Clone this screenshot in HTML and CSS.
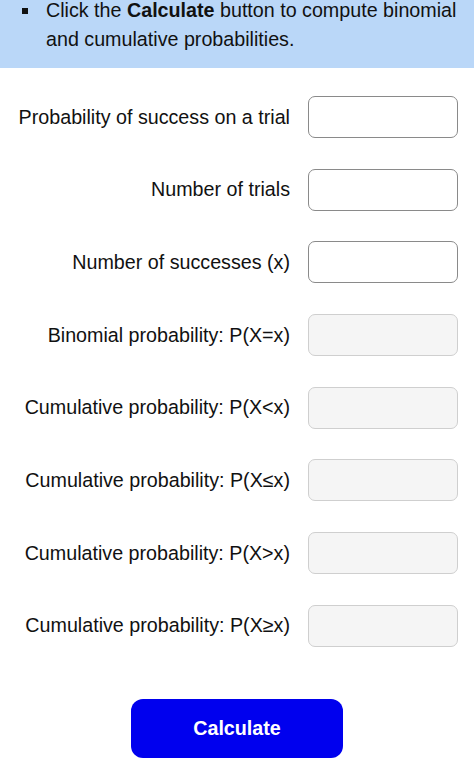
FILE: index.html
```html
<!DOCTYPE html>
<html lang="en">
<head>
    <meta charset="UTF-8">
    <meta name="viewport" content="width=device-width, initial-scale=1.0">
    <title>Binomial Calculator</title>
    <link rel="stylesheet" href="styles.css">
</head>
<body>
<div class="instructions">
    <ul class="tips">
        <li><span>Click the <b>Calculate</b> button to compute binomial and cumulative probabilities.</span></li>
    </ul>
</div>

<form class="calc" onsubmit="return false;">
    <div class="row">
        <label for="p">Probability of success on a trial</label>
        <input type="text" id="p" class="field">
    </div>
    <div class="row">
        <label for="n">Number of trials</label>
        <input type="text" id="n" class="field">
    </div>
    <div class="row">
        <label for="x">Number of successes (x)</label>
        <input type="text" id="x" class="field">
    </div>
    <div class="row">
        <label for="eq">Binomial probability: P(X=x)</label>
        <input type="text" id="eq" class="field result" readonly>
    </div>
    <div class="row">
        <label for="lt">Cumulative probability: P(X&lt;x)</label>
        <input type="text" id="lt" class="field result" readonly>
    </div>
    <div class="row">
        <label for="le">Cumulative probability: P(X&le;x)</label>
        <input type="text" id="le" class="field result" readonly>
    </div>
    <div class="row">
        <label for="gt">Cumulative probability: P(X&gt;x)</label>
        <input type="text" id="gt" class="field result" readonly>
    </div>
    <div class="row">
        <label for="ge">Cumulative probability: P(X&ge;x)</label>
        <input type="text" id="ge" class="field result" readonly>
    </div>

    <div class="actions">
        <button type="button" class="calc-button">Calculate</button>
    </div>
</form>
</body>
</html>
```

FILE: styles.css
```css
body {
    font-family: "Liberation Sans", Arial, sans-serif;
    color: #111;
    background: #fff;
    margin: 0;
    padding: 0;
}
.instructions {
    background-color: #bad7f8;
    height: 68px;
    overflow: hidden;
}
.tips {
    list-style: none;
    margin: 0;
    padding: 0 12px 0 22px;
}
.tips li {
    display: flex;
    font-size: 19.7px;
    line-height: 29px;
    margin-top: -4px;
}
.tips li::before {
    content: "";
    flex: none;
    width: 6px;
    height: 6px;
    background: #111;
    margin: 12px 18px 0 0;
}
.calc {
    display: flex;
    flex-direction: column;
    gap: 30.7px;
    padding: 28px 0 0 0;
}
.row {
    display: flex;
    align-items: center;
    justify-content: flex-end;
    padding-right: 16px;
}
.row label {
    font-size: 19.7px;
    text-align: right;
    margin-right: 18px;
}
.field {
    width: 150px;
    height: 42px;
    box-sizing: border-box;
    border: 1.5px solid #8a8a8a;
    border-radius: 7px;
    background: #fff;
    font-size: 17px;
    padding: 0 8px;
}
.field.result {
    background: #f5f5f5;
    border-color: #cfcfcf;
}
.actions {
    display: flex;
    justify-content: center;
    padding: 21px 0 0 0;
}
.calc-button {
    width: 212px;
    height: 59px;
    background: #0000ee;
    color: #fff;
    border: none;
    border-radius: 12px;
    font-family: "Liberation Sans", Arial, sans-serif;
    font-weight: bold;
    font-size: 19.7px;
    cursor: pointer;
}
```
